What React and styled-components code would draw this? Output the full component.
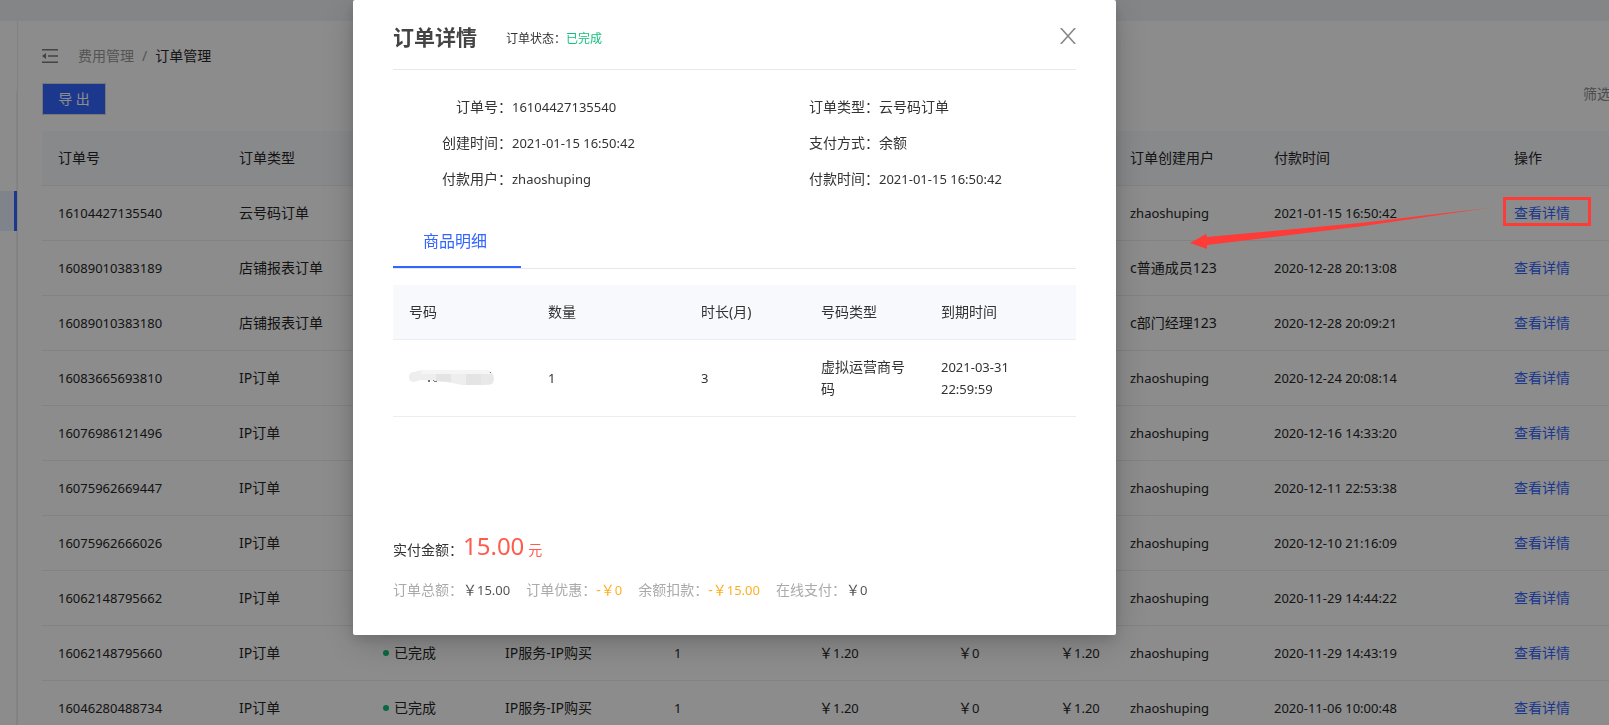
import React, { Fragment } from 'react';
import styled, { createGlobalStyle } from 'styled-components';

const orders = [
  { id: '16104427135540', type: '云号码订单', goods: '云号码-购买', price: '15.00', user: 'zhaoshuping', paid: '2021-01-15 16:50:42' },
  { id: '16089010383189', type: '店铺报表订单', goods: '店铺报表-购买', price: '1.20', user: 'c普通成员123', paid: '2020-12-28 20:13:08' },
  { id: '16089010383180', type: '店铺报表订单', goods: '店铺报表-购买', price: '1.20', user: 'c部门经理123', paid: '2020-12-28 20:09:21' },
  { id: '16083665693810', type: 'IP订单', goods: 'IP服务-IP购买', price: '1.20', user: 'zhaoshuping', paid: '2020-12-24 20:08:14' },
  { id: '16076986121496', type: 'IP订单', goods: 'IP服务-IP购买', price: '1.20', user: 'zhaoshuping', paid: '2020-12-16 14:33:20' },
  { id: '16075962669447', type: 'IP订单', goods: 'IP服务-IP购买', price: '1.20', user: 'zhaoshuping', paid: '2020-12-11 22:53:38' },
  { id: '16075962666026', type: 'IP订单', goods: 'IP服务-IP购买', price: '1.20', user: 'zhaoshuping', paid: '2020-12-10 21:16:09' },
  { id: '16062148795662', type: 'IP订单', goods: 'IP服务-IP购买', price: '1.20', user: 'zhaoshuping', paid: '2020-11-29 14:44:22' },
  { id: '16062148795660', type: 'IP订单', goods: 'IP服务-IP购买', price: '1.20', user: 'zhaoshuping', paid: '2020-11-29 14:43:19' },
  { id: '16046280488734', type: 'IP订单', goods: 'IP服务-IP购买', price: '1.20', user: 'zhaoshuping', paid: '2020-11-06 10:00:48' },
];

const orderColumns = [
  ['订单号', 181],
  ['订单类型', 144],
  ['订单状态', 122],
  ['商品名称', 169],
  ['数量', 145],
  ['订单总额', 139],
  ['优惠', 102],
  ['实付', 70],
  ['订单创建用户', 144],
  ['付款时间', 240],
  ['操作'],
];

const goodsColumns = [
  ['号码', 139],
  ['数量', 153],
  ['时长(月)', 120],
  ['号码类型', 120],
  ['到期时间'],
];

const details = [
  ['订单号', '16104427135540'],
  ['订单类型', '云号码订单'],
  ['创建时间', '2021-01-15 16:50:42'],
  ['支付方式', '余额'],
  ['付款用户', 'zhaoshuping'],
  ['付款时间', '2021-01-15 16:50:42'],
];

const App = () => (
  <Fragment>
    <GlobalStyle />
    <Page>
      <TopBar />
      <Body>
        <Sider>
          <Menu>
            <ActiveItem />
          </Menu>
        </Sider>
        <Main>
          <Breadcrumb>
            <FoldIcon />
            <Crumb href="#">费用管理</Crumb>
            <Slash>/</Slash>
            <span>订单管理</span>
          </Breadcrumb>
          <Toolbar>
            <ExportButton type="button">导 出</ExportButton>
            <FilterButton type="button">筛选</FilterButton>
          </Toolbar>
          <OrderTable />
        </Main>
      </Body>
    </Page>
    <Mask>
      <OrderDialog />
    </Mask>
    <Annotation />
  </Fragment>
);

const Columns = ({ columns }) => (
  <Fragment>
    <colgroup>
      {columns.map(([name, width]) => <col key={name} style={{ width }} />)}
    </colgroup>
    <thead>
      <tr>
        {columns.map(([name]) => <th key={name} scope="col">{name}</th>)}
      </tr>
    </thead>
  </Fragment>
);

const OrderTable = () => (
  <Table>
    <Columns columns={orderColumns} />
    <tbody>
      {orders.map(order => (
        <tr key={order.id}>
          <td><Value text={order.id} /></td>
          <td>{order.type}</td>
          <td><Status>已完成</Status></td>
          <td>{order.goods}</td>
          <td><Value text="1" /></td>
          <td><Money value={order.price} /></td>
          <td><Money value="0" /></td>
          <td><Money value={order.price} /></td>
          <td><Value text={order.user} /></td>
          <td><Value text={order.paid} /></td>
          <td><DetailLink href="#">查看详情</DetailLink></td>
        </tr>
      ))}
    </tbody>
  </Table>
);

// plain latin runs wide next to the chinese glyphs, so it is set one size down
const Value = ({ text }) => /^[\x20-\x7e]+$/.test(text) ? <Latin>{text}</Latin> : text;

// full-width yen sign
const Money = ({ value }) => <Fragment>{'\uffe5'}<Latin>{value}</Latin></Fragment>;

const OrderDialog = () => (
  <Dialog role="dialog" aria-labelledby="dialog-title">
    <DialogHeader>
      <Title id="dialog-title">订单详情</Title>
      <OrderState>订单状态：<Done>已完成</Done></OrderState>
      <CloseButton type="button" aria-label="关闭">
        <svg width="16" height="16" viewBox="0 0 16 16" fill="none" stroke="#888" strokeWidth="1.6">
          <path d="M0.8 0L15.2 16M15.2 0L0.8 16" />
        </svg>
      </CloseButton>
    </DialogHeader>
    <Details>
      {details.map(([label, value]) => (
        <Detail key={label}>
          <dt>{label}：</dt>
          <dd><Value text={value} /></dd>
        </Detail>
      ))}
    </Details>
    <Tabs role="tablist">
      <Tab type="button" role="tab" aria-selected="true">商品明细</Tab>
    </Tabs>
    <Table>
      <Columns columns={goodsColumns} />
      <tbody>
        <tr>
          <td><HiddenNumber /></td>
          <td><Value text="1" /></td>
          <td><Value text="3" /></td>
          <td>虚拟运营商号码</td>
          <td><Value text="2021-03-31 22:59:59" /></td>
        </tr>
      </tbody>
    </Table>
    <Total>
      <span>实付金额：</span>
      <Amount>15.00</Amount>
      <Unit>元</Unit>
    </Total>
    <Summary>
      <SummaryItem>订单总额：<Price><Money value="15.00" /></Price></SummaryItem>
      <SummaryItem>订单优惠：<Price $minus>-<Money value="0" /></Price></SummaryItem>
      <SummaryItem>余额扣款：<Price $minus>-<Money value="15.00" /></Price></SummaryItem>
      <SummaryItem>在线支付：<Price><Money value="0" /></Price></SummaryItem>
    </Summary>
  </Dialog>
);

const FoldIcon = () => (
  <svg width="16" height="14" viewBox="0 0 16 14" fill="#7a7a7a">
    <path d="M0 0H16V1.4H0zM6 6.3H16V7.7H6zM0 12.6H16V14H0zM0 7L4 4V10z" />
  </svg>
);

// phone number smeared over, only the feet of two digits stay visible
const HiddenNumber = () => (
  <NumberSmear width="86" height="16" viewBox="0 0 86 16">
    <path d="M5 2L13 0H78Q85 2 85 8Q85 15 79 15H53L38 12L27 11L12 10L5 12Q0 12 0 7Q0 2 5 2z" fill="#eeeeee" />
    <path d="M57 4H72V15H57zM27 4H42V12L27 11z" fill="#e4e4e4" />
    <path d="M72 4H83Q86 9 83 14L72 15z" fill="#e8e8e8" />
    <path d="M13 0H78L82 4H12z" fill="#f5f5f5" />
    <path d="M19 10h2v2h-2zM24 10h1v1h-1zM25 11h3v1h-3zM81 2h1v1h-1z" fill="#777" />
  </NumberSmear>
);

const Annotation = () => (
  <Marks width="402" height="50" viewBox="0 0 402 50" fill="#ff3b38" aria-hidden="true">
    <path d="M0 35L16 26L17 29L170 15L298 0L170 18.5L17 37L17 41z" />
    <rect x="314.5" y="-9.5" width="85" height="26" fill="none" stroke="#ff3b38" strokeWidth="3" />
  </Marks>
);

const GlobalStyle = createGlobalStyle`
  * {
    box-sizing: border-box;
  }

  body {
    margin: 0;
    color: #262626;
    font: 14px/22px "Noto Sans", "Noto Sans CJK SC", sans-serif;
  }

  button {
    font: inherit;
    cursor: pointer;
  }

  a {
    text-decoration: none;
  }
`

const Page = styled.div`
  display: flex;
  flex-direction: column;
  height: 100vh;
  overflow: hidden;
`

const TopBar = styled.header`
  flex: none;
  height: 21px;
  background: #f0f3f6;
`

const Body = styled.div`
  display: flex;
  flex: 1;
  min-height: 0;
`

const Sider = styled.aside`
  display: flex;
  flex: none;
  width: 18px;
  padding-top: 70px;
  border-right: 1px solid #ebebeb;
`

const Menu = styled.div`
  flex: 1;
  padding-top: 100px;
  border-right: 1px solid #f0f0f0;
`

const ActiveItem = styled.div`
  height: 40px;
  margin-right: -1px;
  background: #e8f1ff;
  border-right: 3px solid #3366ff;
`

const Main = styled.main`
  flex: 1;
  min-width: 0;
  padding: 24px 0 0 24px;
`

const Breadcrumb = styled.nav`
  display: flex;
  align-items: center;

  svg {
    margin-right: 20px;
  }
`

const Crumb = styled.a`
  color: #999;
`

const Slash = styled.span`
  margin: 0 8px;
  color: #999;
`

const Toolbar = styled.div`
  display: flex;
  justify-content: space-between;
  align-items: center;
  margin: 16px 0;
`

const ExportButton = styled.button`
  width: 64px;
  height: 32px;
  padding: 0;
  color: #fff;
  background: #3366ff;
  border: 1px solid #d9d9d9;
`

const FilterButton = styled.button`
  width: 26px;
  padding: 0 0 10px;
  overflow: hidden;
  white-space: nowrap;
  color: #8c8c8c;
  background: none;
  border: 0;
`

const Table = styled.table`
  width: 100%;
  table-layout: fixed;
  border-collapse: separate;
  border-spacing: 0;

  th,
  td {
    padding: 16px;
    text-align: left;
    font-weight: normal;
    border-bottom: 1px solid #ebedf0;
  }

  th {
    background: #f7f9fd;
  }

  td:nth-child(n + 6):nth-child(-n + 8) {
    white-space: nowrap;
  }
`

const Latin = styled.span`
  font-size: 13px;
`

const Status = styled.span`
  display: flex;
  align-items: center;
  gap: 5px;

  &::before {
    content: '';
    width: 6px;
    height: 6px;
    border-radius: 50%;
    background: #12bf7a;
  }
`

const DetailLink = styled.a`
  color: #3366ff;
`

const Mask = styled.div`
  position: fixed;
  inset: 0;
  display: flex;
  justify-content: center;
  align-items: flex-start;
  padding-right: 140px;
  background: rgba(0, 0, 0, 0.45);
`

const Dialog = styled.section`
  width: 100%;
  max-width: 763px;
  padding: 0 40px 34px;
  color: #333;
  background: #fff;
  border-radius: 2px;
  box-shadow: 0 4px 12px rgba(0, 0, 0, 0.12), 0 8px 36px rgba(0, 0, 0, 0.2);
`

const DialogHeader = styled.header`
  display: flex;
  align-items: center;
  height: 70px;
  padding-top: 4px;
  border-bottom: 1px solid #e8e8e8;
`

const Title = styled.h2`
  margin: 0;
  font-size: 21px;
  color: #444;
`

const OrderState = styled.span`
  margin-left: 29px;
  padding-top: 4px;
  font-size: 12px;
`

const Done = styled.span`
  color: #12bf7a;
`

const CloseButton = styled.button`
  display: flex;
  margin-left: auto;
  padding: 0 0 2px;
  background: none;
  border: 0;
`

const Details = styled.dl`
  display: grid;
  grid-template-columns: 367fr 316fr;
  row-gap: 14px;
  margin: 26px 0 36px;
`

const Detail = styled.div`
  display: flex;

  dt {
    width: 119px;
    text-align: right;
  }

  dd {
    margin: 0;
  }
`

const Tabs = styled.div`
  display: flex;
  margin-bottom: 16px;
  border-bottom: 1px solid #e8e8e8;
`

const Tab = styled.button`
  height: 42px;
  padding: 0 34px 10px 30px;
  font-size: 16px;
  color: #3366ff;
  background: none;
  border: 0;
  border-bottom: 2px solid #3366ff;
`

const NumberSmear = styled.svg`
  display: block;
`

const Total = styled.div`
  display: flex;
  align-items: baseline;
  margin-top: 113px;
`

const Amount = styled.span`
  font-size: 24px;
  line-height: 32px;
  color: #ff5c4d;
`

const Unit = styled.span`
  margin-left: 4px;
  color: #ff5c4d;
`

const Summary = styled.div`
  display: flex;
  gap: 16px;
  margin-top: 17px;
`

const SummaryItem = styled.span`
  color: #aaa;
`

const Price = styled.span`
  color: ${props => props.$minus ? '#fdb022' : '#555'};
`

const Marks = styled.svg`
  position: absolute;
  top: 208px;
  left: 1190px;
  overflow: visible;
`

export default App;
